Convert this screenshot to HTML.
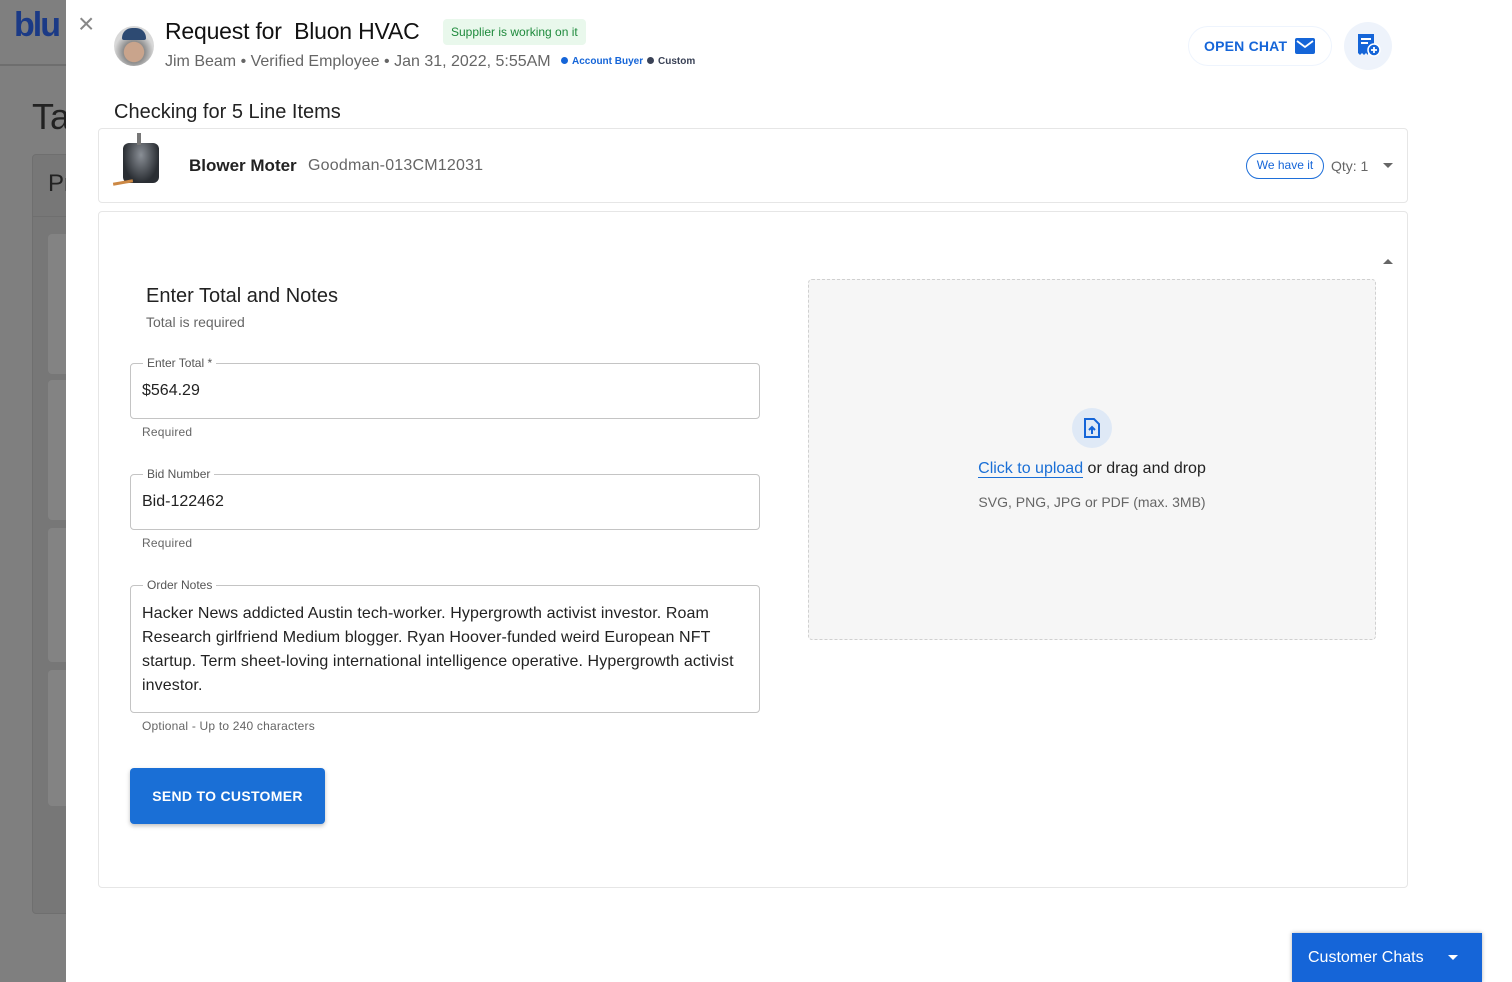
<!DOCTYPE html>
<html><head><style>
*{box-sizing:border-box;margin:0;padding:0}
body{width:1512px;height:982px;overflow:hidden;position:relative;font-family:"Liberation Sans",Roboto,sans-serif;background:#fff}
.bg{position:absolute;left:0;top:0;width:66px;height:982px;background:#7f7f7f;overflow:hidden}
.abs{position:absolute}
.fs{border:1px solid #c4c4c4;border-radius:4px;position:absolute;left:130px;width:630px}
.lg{position:absolute;left:12px;top:-8px;background:#fff;padding:0 4px;font-size:12px;color:#555}
.help{position:absolute;left:142px;font-size:12px;color:#666;letter-spacing:.2px}
</style></head><body>
<div class="bg">
  <div class="abs" style="left:0;top:64px;width:66px;height:2px;background:#6e6e6e"></div>
  <div class="abs" style="left:14px;top:6px;font-size:34px;font-weight:bold;color:#1b3a86;letter-spacing:-2px">blu</div>
  <div class="abs" style="left:32px;top:96px;font-size:36px;color:#222">Ta</div>
  <div class="abs" style="left:32px;top:154px;width:40px;height:760px;border:1px solid #6f6f6f;border-radius:4px;background:#777"></div>
  <div class="abs" style="left:48px;top:170px;font-size:24px;color:#222">Pr</div>
  <div class="abs" style="left:32px;top:216px;width:40px;height:1px;background:#6f6f6f"></div>
  <div class="abs" style="left:48px;top:234px;width:30px;height:140px;border-radius:4px;background:#838383"></div>
  <div class="abs" style="left:48px;top:380px;width:30px;height:140px;border-radius:4px;background:#838383"></div>
  <div class="abs" style="left:48px;top:528px;width:30px;height:134px;border-radius:4px;background:#838383"></div>
  <div class="abs" style="left:48px;top:670px;width:30px;height:136px;border-radius:4px;background:#838383"></div>
</div>
<div class="abs" style="left:78px;top:8px;font-size:28px;color:#888">×</div>
<div class="abs" style="left:114px;top:26px;width:40px;height:40px;border-radius:50%;background:radial-gradient(circle at 50% 65%,#c9a48c 0 30%,#8c8c8c 32%,#d8d8d8 60%);overflow:hidden"><div style="position:absolute;left:8px;top:2px;width:24px;height:12px;background:#2d4a72;border-radius:10px 10px 2px 2px"></div></div>
<div class="abs" style="left:165px;top:18px;font-size:23px;color:#111;letter-spacing:-.2px">Request for&nbsp; Bluon HVAC</div>
<div class="abs" style="left:443px;top:19px;height:26px;padding:0 8px;background:#e9f8ec;border-radius:4px;color:#1e8a3c;font-size:12px;line-height:26px">Supplier is working on it</div>
<div class="abs" style="left:165px;top:53px;font-size:16px;color:#666">Jim Beam • Verified Employee • Jan 31, 2022, 5:55AM</div>
<div class="abs" style="left:561px;top:56px;font-size:10px;font-weight:bold;color:#1565d8"><span style="display:inline-block;width:7px;height:7px;border-radius:50%;background:#1565d8;margin-right:4px"></span>Account Buyer</div>
<div class="abs" style="left:647px;top:56px;font-size:10px;font-weight:bold;color:#3a4256"><span style="display:inline-block;width:7px;height:7px;border-radius:50%;background:#3a4256;margin-right:4px"></span>Custom</div>
<div class="abs" style="left:1188px;top:26px;width:144px;height:40px;border:1px solid #eef4fd;border-radius:20px;color:#1565d8;font-size:14px;font-weight:bold;letter-spacing:.2px;line-height:38px;padding-left:15px">OPEN CHAT
<svg style="position:absolute;left:106px;top:11px" width="20" height="16"><rect width="20" height="16" rx="2" fill="#1565d8"/><path d="M2 3l8 6 8-6" stroke="#fff" stroke-width="1.8" fill="none"/></svg></div>
<div class="abs" style="left:1344px;top:22px;width:48px;height:48px;border-radius:50%;background:#eef3fb">
<svg style="position:absolute;left:12px;top:10px" width="26" height="26"><path d="M2 2h16v13h-6v8l-2-2-2 2-2-2-2 2-2-2z" fill="#1565d8"/><rect x="5" y="6" width="10" height="2" fill="#fff"/><rect x="5" y="10" width="7" height="2" fill="#fff"/><circle cx="18" cy="18" r="6" fill="#1565d8" stroke="#fff" stroke-width="1.5"/><path d="M18 15v6M15 18h6" stroke="#fff" stroke-width="1.8"/></svg></div>
<div class="abs" style="left:114px;top:101px;font-size:20px;color:#222">Checking for 5 Line Items</div>
<div class="abs" style="left:98px;top:128px;width:1310px;height:75px;border:1px solid #e6e6e6;border-radius:4px">
  <div class="abs" style="left:24px;top:14px;width:36px;height:40px;background:radial-gradient(ellipse at 50% 30%,#8a8f96,#2a2e33 70%);border-radius:6px"></div>
  <div class="abs" style="left:38px;top:4px;width:4px;height:12px;background:#777"></div>
  <div class="abs" style="left:14px;top:52px;width:20px;height:3px;background:#c84;transform:rotate(-10deg)"></div>
  <div class="abs" style="left:90px;top:27px;font-size:17px;font-weight:bold;color:#222">Blower Moter</div>
  <div class="abs" style="left:209px;top:28px;font-size:16px;color:#666;letter-spacing:.2px">Goodman-013CM12031</div>
  <div class="abs" style="left:1147px;top:24px;width:78px;height:26px;border:1.5px solid #1e6fd9;border-radius:13px;color:#1565d8;font-size:12px;line-height:23px;text-align:center">We have it</div>
  <div class="abs" style="left:1232px;top:29px;font-size:14px;color:#666">Qty: 1</div>
  <div class="abs" style="left:1284px;top:34px;border:5px solid transparent;border-top-color:#666"></div>
</div>
<div class="abs" style="left:98px;top:211px;width:1310px;height:677px;border:1px solid #e6e6e6;border-radius:4px">
  <div class="abs" style="left:1284px;top:42px;border:5px solid transparent;border-bottom-color:#666"></div>
</div>
<div class="abs" style="left:146px;top:285px;font-size:20px;color:#222">Enter Total and Notes</div>
<div class="abs" style="left:146px;top:314px;font-size:14px;color:#666">Total is required</div>
<div class="fs" style="top:363px;height:56px"><span class="lg">Enter Total *</span><div style="position:absolute;left:11px;top:18px;font-size:16px;color:#222">$564.29</div></div>
<div class="help" style="top:425px">Required</div>
<div class="fs" style="top:474px;height:56px"><span class="lg">Bid Number</span><div style="position:absolute;left:11px;top:18px;font-size:16px;color:#222">Bid-122462</div></div>
<div class="help" style="top:536px">Required</div>
<div class="fs" style="top:585px;height:128px"><span class="lg">Order Notes</span><div style="position:absolute;left:11px;top:16px;right:6px;font-size:16px;line-height:24px;color:#222;letter-spacing:.1px">Hacker News addicted Austin tech-worker. Hypergrowth activist investor. Roam Research girlfriend Medium blogger. Ryan Hoover-funded weird European NFT startup. Term sheet-loving international intelligence operative. Hypergrowth activist investor.</div></div>
<div class="help" style="top:719px">Optional - Up to 240 characters</div>
<div class="abs" style="left:130px;top:768px;width:195px;height:56px;background:#1a6fd6;border-radius:4px;box-shadow:0 2px 4px rgba(0,0,0,.25);color:#fff;font-size:14px;font-weight:bold;letter-spacing:.3px;text-align:center;line-height:56px">SEND TO CUSTOMER</div>
<div class="abs" style="left:808px;top:279px;width:568px;height:361px;border:1px dashed #d0d0d0;border-radius:4px;background:#f6f6f6">
  <div class="abs" style="left:263px;top:128px;width:40px;height:40px;border-radius:50%;background:#dfe9f6">
  <svg style="position:absolute;left:12px;top:10px" width="16" height="20"><path d="M1 1h9l5 5v13H1z" fill="none" stroke="#1565d8" stroke-width="2"/><path d="M8 16V9M5 12l3-3 3 3" stroke="#1565d8" stroke-width="2" fill="none"/></svg></div>
  <div class="abs" style="left:0;width:100%;top:180px;text-align:center;font-size:16px;color:#222"><span style="color:#1a6fd6;border-bottom:1px solid #1a6fd6">Click to upload</span> or drag and drop</div>
  <div class="abs" style="left:0;width:100%;top:214px;text-align:center;font-size:14px;color:#666">SVG, PNG, JPG or PDF (max. 3MB)</div>
</div>
<div class="abs" style="left:1292px;top:933px;width:190px;height:49px;background:#1565d8;color:#fff;font-size:16px;line-height:49px;padding-left:16px;box-shadow:0 0 4px rgba(0,0,0,.3)">Customer Chats<span style="position:absolute;left:156px;top:22px;border:5px solid transparent;border-top-color:#fff"></span></div>
</body></html>
